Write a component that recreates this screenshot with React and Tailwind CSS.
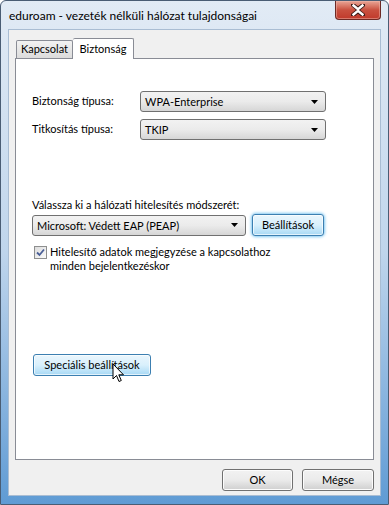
import React from "react";

const font = { fontFamily: 'Lato, "Noto Sans", sans-serif' };

function Arrow() {
  return (
    <svg width="7" height="4" viewBox="0 0 7 4" className="block">
      <path d="M0 0 H7 L3.5 4 Z" fill="#000" />
    </svg>
  );
}

function Combo({ text, w }) {
  return (
    <div
      className={`${w} h-[21px] flex items-center justify-between pl-[4px] pr-[7px] rounded-[3px] border border-[#707070] bg-gradient-to-b from-[#f2f2f2] via-[#ebebeb] to-[#d6d6d6] text-[11px] text-black`}
    >
      <span className="leading-none whitespace-nowrap">{text}</span>
      <Arrow />
    </div>
  );
}

function Button({ children, w, hot }) {
  return hot ? (
    <div
      className={`${w} h-[22px] flex items-center justify-center rounded-[3px] border border-[#3c7fb1] bg-gradient-to-b from-[#eaf6fd] via-[#d9f0fc] to-[#a7d9f5] text-[11px] text-black shadow-[inset_0_0_0_1px_#ffffffaa] whitespace-nowrap`}
    >
      {children}
    </div>
  ) : (
    <div
      className={`${w} h-[22px] flex items-center justify-center rounded-[3px] border border-[#707070] bg-gradient-to-b from-[#f2f2f2] via-[#ebebeb] to-[#cfcfcf] text-[11px] text-black shadow-[inset_0_0_0_1px_#fcfcfc] whitespace-nowrap`}
    >
      {children}
    </div>
  );
}

export default function App() {
  return (
    <div
      style={font}
      className="relative w-[389px] h-[505px] overflow-hidden flex flex-col rounded-t-[6px] border border-[#4a5d74] bg-gradient-to-b from-[#e2ebf5] via-[#bfd5ec] to-[#5f9bd4]"
    >
      {/* title bar */}
      <div className="h-[28px] flex items-start justify-between">
        <div className="pl-[8px] pt-[6px] text-[12px] leading-[18px] text-black whitespace-nowrap">
          eduroam - vezeték nélküli hálózat tulajdonságai
        </div>
        <div className="mr-[7px] w-[46px] h-[19px] rounded-b-[4px] border border-t-0 border-[#6d2a25] bg-gradient-to-b from-[#e8a596] via-[#c9503f] to-[#c0392b] flex items-center justify-center shadow-[inset_0_0_0_1px_#f0b8ab80]">
          <svg width="14" height="12" viewBox="0 0 14 12">
            <path
              d="M2 1 L7 5 L12 1 M2 11 L7 7 L12 11"
              stroke="#3d1b17"
              strokeWidth="4.2"
              fill="none"
              strokeLinecap="square"
            />
            <path
              d="M2.5 1.5 L7 5.2 L11.5 1.5 M2.5 10.5 L7 6.8 L11.5 10.5"
              stroke="#ffffff"
              strokeWidth="2.4"
              fill="none"
              strokeLinecap="square"
            />
          </svg>
        </div>
      </div>

      {/* client area */}
      <div className="mx-[7px] mb-[8px] flex-1 flex flex-col border border-[#a9bdd3] bg-[#f0f0f0] pt-[7px] px-[6px]">
        {/* tabs */}
        <div className="flex items-end h-[21px] pl-[1px] relative z-10">
          <div className="h-[18px] w-[57px] flex items-center justify-center border border-b-0 border-[#898c95] bg-gradient-to-b from-[#f2f2f2] to-[#dcdcdc] text-[11px] rounded-t-[2px] whitespace-nowrap">
            Kapcsolat
          </div>
          <div className="h-[21px] -mb-px w-[61px] flex items-start justify-center pt-[2px] border border-b-0 border-l-0 border-[#898c95] bg-white text-[11px] rounded-t-[2px] whitespace-nowrap">
            Biztonság
          </div>
        </div>

        {/* panel */}
        <div className="h-[402px] border border-[#898c95] bg-white pl-[16px] pt-[32px] text-[11px] text-black">
          <div className="flex items-center h-[21px]">
            <div className="w-[108px]">Biztonság típusa:</div>
            <Combo w="w-[186px]" text="WPA-Enterprise" />
          </div>
          <div className="flex items-center h-[21px] mt-[7px]">
            <div className="w-[108px]">Titkosítás típusa:</div>
            <Combo w="w-[186px]" text="TKIP" />
          </div>

          <div className="mt-[57px] leading-[16px] whitespace-nowrap">
            Válassza ki a hálózati hitelesítés módszerét:
          </div>
          <div className="flex items-center mt-[1px] gap-[6px]">
            <Combo w="w-[214px]" text="Microsoft: Védett EAP (PEAP)" />
            <div className="rounded-[4px] shadow-[0_0_3px_1px_#7fc8f2]">
              <Button w="w-[72px]" hot>
                Beállítások
              </Button>
            </div>
          </div>
          <div className="flex items-start mt-[9px] pl-[2px]">
            <div className="shrink-0 w-[13px] h-[13px] border border-[#8e8f8f] bg-gradient-to-br from-[#dcdcdc] to-[#fbfbfb] mt-[1px] flex items-center justify-center">
              <svg width="9" height="9" viewBox="0 0 9 9">
                <path d="M1 4.5 L3.5 7 L8 1.5" stroke="#4a5f97" strokeWidth="1.8" fill="none" />
              </svg>
            </div>
            <div className="ml-[3px] leading-[14px] whitespace-nowrap">
              <div>Hitelesítő adatok megjegyzése a kapcsolathoz</div>
              <div>minden bejelentkezéskor</div>
            </div>
          </div>

          <div className="mt-[81px] pl-[1px]">
            <Button w="w-[118px]" hot>
              Speciális beállítások
            </Button>
          </div>
        </div>

        {/* bottom buttons */}
        <div className="flex justify-end gap-[9px] mt-[9px]">
          <Button w="w-[71px]">OK</Button>
          <Button w="w-[72px]">Mégse</Button>
        </div>
      </div>

      {/* mouse cursor overlay */}
      <svg
        className="absolute left-[111px] top-[362px]"
        width="13"
        height="20"
        viewBox="0 0 13 20"
      >
        <path
          d="M1 1 L1 16 L4.5 12.5 L7 18.5 L9.3 17.5 L6.8 11.8 L11.5 11.8 Z"
          fill="#fff"
          stroke="#000"
          strokeWidth="1"
          strokeLinejoin="miter"
        />
      </svg>
    </div>
  );
}
